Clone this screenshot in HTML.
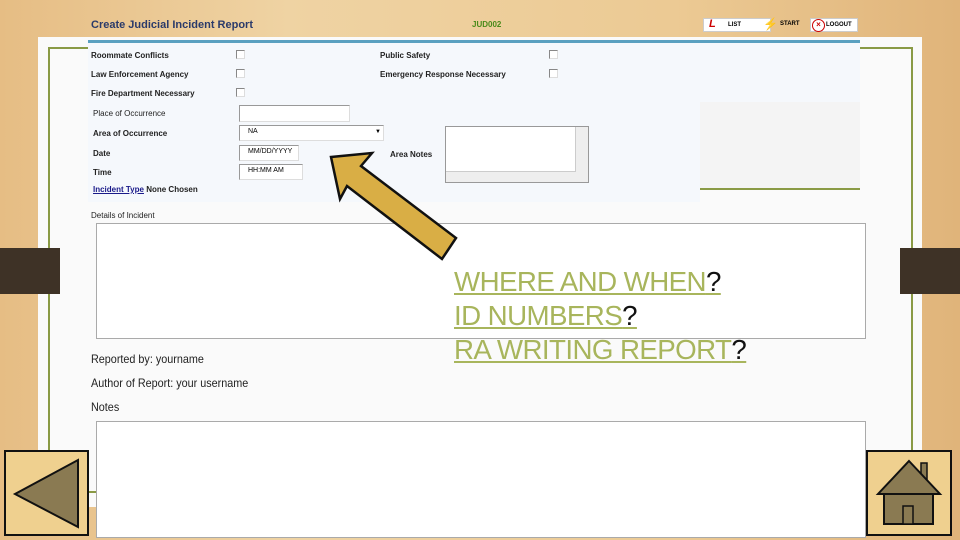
<!DOCTYPE html><html><head><meta charset="utf-8"><style>
body{margin:0;width:960px;height:540px;overflow:hidden;position:relative;background:linear-gradient(90deg,#e6bd84,#efd3a3 30%,#ecca94 70%,#e0b47a);font-family:"Liberation Sans",Arial,sans-serif}
div{position:absolute;box-sizing:border-box}
.t{font-size:8px;font-weight:bold;color:#222;position:absolute;white-space:nowrap}
.cb{width:9px;height:9px;border:1px solid #888;border-right-color:#ddd;border-bottom-color:#ddd;background:#fff}
.in{background:#fff;border:1px solid #999;border-right-color:#ddd;border-bottom-color:#ddd;font-size:7px;padding:2px 0 0 8px}
.s{font-size:12px;color:#222;transform:scaleX(.9);transform-origin:left;white-space:nowrap;position:absolute}
.big{font-size:28px;color:#a8b55c;text-decoration:underline;white-space:nowrap;position:absolute;left:454px;letter-spacing:-0.6px;transform:scaleX(.99);transform-origin:left}
.big span{color:#111;text-decoration:none}
</style></head><body>
<div style="left:38px;top:37px;width:884px;height:470px;background:#fafafa"></div>
<div style="left:48px;top:47px;width:865px;height:446px;border:2px solid #8a9a45"></div>
<div style="left:88px;top:40px;width:772px;height:62px;background:#f5f8fc;border-top:3px solid #5aa0c0"></div>
<div style="left:88px;top:102px;width:612px;height:100px;background:#f5f8fc"></div>
<div style="left:700px;top:102px;width:160px;height:88px;background:#f4f4f4;border-bottom:2px solid #8a9a45"></div>
<div class="t" style="left:91px;top:19px;font-size:11px;color:#2a3a6a">Create Judicial Incident Report</div>
<div class="t" style="left:472px;top:20px;color:#4a8a1a">JUD002</div>
<div style="left:703px;top:18px;width:68px;height:14px;background:#fff;border:1px solid #ccc;font-size:6px;font-weight:bold;padding:3px 0 0 24px"><span style="position:absolute;left:5px;top:-1px;color:#c00;font-size:11px;font-style:italic">L</span>LIST</div>
<div style="left:763px;top:17px;font-size:12px;color:#c00">⚡</div>
<div style="left:780px;top:21px;font-size:6px;font-weight:bold">START</div>
<div style="left:810px;top:18px;width:48px;height:14px;background:#fff;border:1px solid #ccc;font-size:6px;font-weight:bold;padding:3px 0 0 15px"><span style="position:absolute;left:1px;top:0;width:11px;height:11px;border:1.5px solid #c00;border-radius:50%;color:#c00;font-size:8px;line-height:9px;text-align:center">×</span>LOGOUT</div>
<div class="t" style="left:91px;top:51px">Roommate Conflicts</div><div class="cb" style="left:236px;top:50px"></div>
<div class="t" style="left:91px;top:70px">Law Enforcement Agency</div><div class="cb" style="left:236px;top:69px"></div>
<div class="t" style="left:91px;top:89px">Fire Department Necessary</div><div class="cb" style="left:236px;top:88px"></div>
<div class="t" style="left:380px;top:51px">Public Safety</div><div class="cb" style="left:549px;top:50px"></div>
<div class="t" style="left:380px;top:70px">Emergency Response Necessary</div><div class="cb" style="left:549px;top:69px"></div>
<div class="t" style="left:93px;top:109px;font-weight:normal">Place of Occurrence</div><div class="in" style="left:239px;top:105px;width:111px;height:17px"></div>
<div class="t" style="left:93px;top:129px">Area of Occurrence</div><div class="in" style="left:239px;top:125px;width:145px;height:16px">NA<span style="position:absolute;right:2px;top:3px;font-size:6px">▼</span></div>
<div class="t" style="left:93px;top:149px">Date</div><div class="in" style="left:239px;top:145px;width:60px;height:16px">MM/DD/YYYY</div>
<div class="t" style="left:93px;top:168px">Time</div><div class="in" style="left:239px;top:164px;width:64px;height:16px">HH:MM AM</div>
<div class="t" style="left:93px;top:185px"><u style="color:#1a1a8a">Incident Type</u> None Chosen</div>
<div class="t" style="left:390px;top:150px">Area Notes</div>
<div style="left:445px;top:126px;width:144px;height:57px;border:1px solid #999;background:#fff"><div style="right:0;top:0;width:13px;height:55px;background:#eee;border-left:1px solid #ccc"></div><div style="left:0;bottom:0;width:130px;height:11px;background:#eee;border-top:1px solid #ccc"></div></div>
<div class="t" style="left:91px;top:211px;font-weight:normal">Details of Incident</div>
<div style="left:96px;top:223px;width:770px;height:116px;background:#fff;border:1px solid #aaa"></div>
<div class="s" style="left:91px;top:352px">Reported by:  yourname</div>
<div class="s" style="left:91px;top:376px">Author of Report:  your username</div>
<div class="s" style="left:91px;top:400px">Notes</div>
<div style="left:96px;top:421px;width:770px;height:117px;background:#fff;border:1px solid #aaa"></div>
<div style="left:0;top:248px;width:60px;height:46px;background:#3e3226"></div>
<div style="left:900px;top:248px;width:60px;height:46px;background:#3e3226"></div>
<div class="big" style="top:266px">WHERE AND WHEN<span>?</span></div>
<div class="big" style="top:300px">ID NUMBERS<span>?</span></div>
<div class="big" style="top:334px">RA WRITING REPORT<span>?</span></div>
<svg style="position:absolute;left:0;top:0" width="960" height="540"><polygon points="331,157 372,153 361,166 456,238 442,259 347,186 340,199" fill="#d9ae45" stroke="#111" stroke-width="2.5" stroke-linejoin="miter"/>
<rect x="5" y="451" width="83" height="84" fill="#efd08f" stroke="#111" stroke-width="2"/><polygon points="78,460 78,527 15,494" fill="#8a7a52" stroke="#111" stroke-width="2"/>
<rect x="867" y="451" width="84" height="84" fill="#efd08f" stroke="#111" stroke-width="2"/><rect x="921" y="463" width="6" height="16" fill="#8a7a52" stroke="#111" stroke-width="1.5"/><polygon points="909,461 940,494 878,494" fill="#8a7a52" stroke="#111" stroke-width="2"/><rect x="884" y="494" width="49" height="30" fill="#8a7a52" stroke="#111" stroke-width="2"/><rect x="903" y="506" width="10" height="18" fill="#8a7a52" stroke="#111" stroke-width="1.5"/></svg>
</body></html>
